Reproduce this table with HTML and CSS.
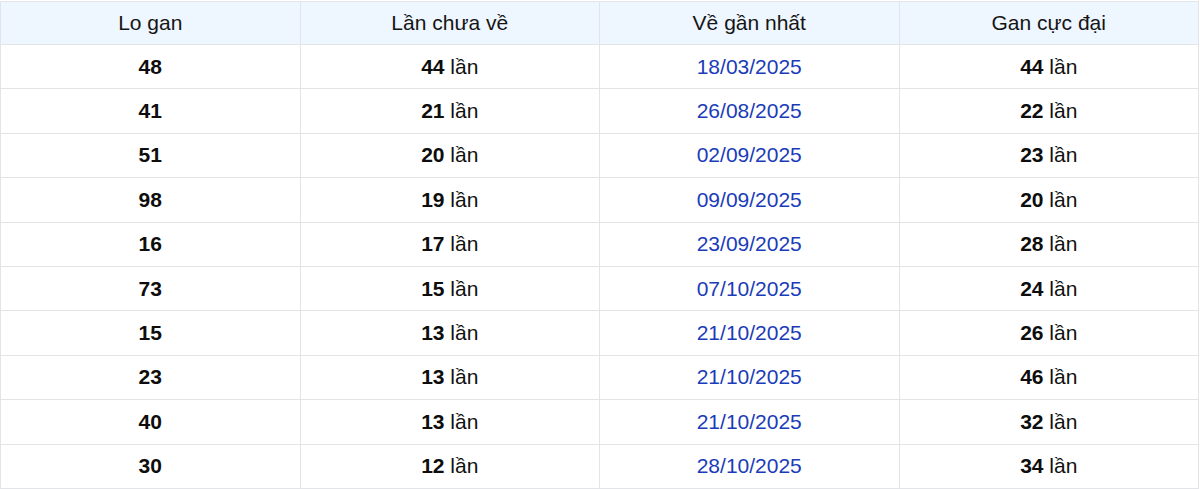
FILE: index.html
```html
<!DOCTYPE html>
<html lang="vi">
<head>
<meta charset="utf-8">
<link rel="stylesheet" href="styles.css">
</head>
<body>
<table class="gan-table">
  <thead>
    <tr><th>Lo gan</th><th>Lần chưa về</th><th>Về gần nhất</th><th>Gan cực đại</th></tr>
  </thead>
  <tbody>
    <tr><td><b>48</b></td><td><b>44</b> lần</td><td class="date">18/03/2025</td><td><b>44</b> lần</td></tr>
    <tr><td><b>41</b></td><td><b>21</b> lần</td><td class="date">26/08/2025</td><td><b>22</b> lần</td></tr>
    <tr><td><b>51</b></td><td><b>20</b> lần</td><td class="date">02/09/2025</td><td><b>23</b> lần</td></tr>
    <tr><td><b>98</b></td><td><b>19</b> lần</td><td class="date">09/09/2025</td><td><b>20</b> lần</td></tr>
    <tr><td><b>16</b></td><td><b>17</b> lần</td><td class="date">23/09/2025</td><td><b>28</b> lần</td></tr>
    <tr><td><b>73</b></td><td><b>15</b> lần</td><td class="date">07/10/2025</td><td><b>24</b> lần</td></tr>
    <tr><td><b>15</b></td><td><b>13</b> lần</td><td class="date">21/10/2025</td><td><b>26</b> lần</td></tr>
    <tr><td><b>23</b></td><td><b>13</b> lần</td><td class="date">21/10/2025</td><td><b>46</b> lần</td></tr>
    <tr><td><b>40</b></td><td><b>13</b> lần</td><td class="date">21/10/2025</td><td><b>32</b> lần</td></tr>
    <tr><td><b>30</b></td><td><b>12</b> lần</td><td class="date">28/10/2025</td><td><b>34</b> lần</td></tr>
  </tbody>
</table>
</body>
</html>
```
FILE: styles.css
```css
html, body {
  margin: 0;
  padding: 0;
  background: #ffffff;
}
body {
  font-family: "Liberation Sans", Arial, sans-serif;
  font-size: 21px;
  color: #111111;
}
.gan-table {
  width: 1199px;
  border-collapse: collapse;
  table-layout: fixed;
  margin-top: 1px;
}
.gan-table th,
.gan-table td {
  border: 1px solid #e2e4e8;
  text-align: center;
  padding: 9.5px 8px;
  line-height: 24.4px;
  font-size: 21px;
}
.gan-table th {
  font-weight: normal;
  background: #eef6ff;
  color: #151515;
  line-height: 23px;
  padding: 9px 8px 10px;
}
.gan-table td b {
  font-weight: bold;
  color: #0d0d0d;
}
.gan-table td.date {
  color: #1a3cb8;
}
```
